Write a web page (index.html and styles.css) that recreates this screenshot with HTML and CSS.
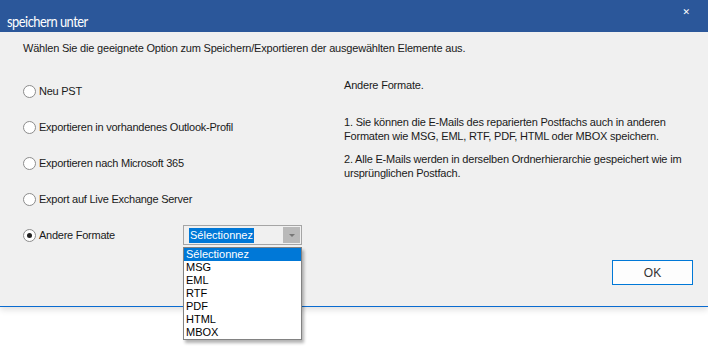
FILE: index.html
```html
<!DOCTYPE html>
<html>
<head>
  <title>speichern unter</title>
  <link rel="stylesheet" href="styles.css">
</head>
<body>
  <div class="dialog">
    <div class="titlebar">
      <span class="title">speichern unter</span>
      <span class="close">&#x2715;</span>
    </div>

    <div class="content">
      <p class="intro">Wählen Sie die geeignete Option zum Speichern/Exportieren der ausgewählten Elemente aus.</p>

      <div class="main">
        <div class="options">
          <div class="option"><span class="radio"></span>Neu PST</div>
          <div class="option"><span class="radio"></span>Exportieren in vorhandenes Outlook-Profil</div>
          <div class="option"><span class="radio"></span>Exportieren nach Microsoft 365</div>
          <div class="option"><span class="radio"></span>Export auf Live Exchange Server</div>
          <div class="option">
            <span class="radio checked"></span><span class="label">Andere Formate</span>
            <div class="combo">
              <div class="combo-box">
                <span class="combo-value">Sélectionnez</span>
                <span class="combo-arrow"></span>
              </div>
              <ul class="combo-list">
                <li class="active">Sélectionnez</li>
                <li>MSG</li>
                <li>EML</li>
                <li>RTF</li>
                <li>PDF</li>
                <li>HTML</li>
                <li>MBOX</li>
              </ul>
            </div>
          </div>
        </div>

        <div class="info">
          <p class="info-head">Andere Formate.</p>
          <p>1. Sie können die E-Mails des reparierten Postfachs auch in anderen Formaten wie MSG, EML, RTF, PDF, HTML oder MBOX speichern.</p>
          <p>2. Alle E-Mails werden in derselben Ordnerhierarchie gespeichert wie im ursprünglichen Postfach.</p>
        </div>
      </div>

      <div class="footer">
        <button class="ok">OK</button>
      </div>
    </div>
  </div>
</body>
</html>
```

FILE: styles.css
```css
html, body {
  height: 100%;
}
body {
  margin: 0;
  background: #fff;
  font-family: "Liberation Sans", Arial, sans-serif;
  font-size: 11px;
  color: #1a1a1a;
}

.dialog {
  width: 708px;
  background: #f0f0f0;
  border-bottom: 1px solid #0a6bd0;
  box-shadow: 0 3px 6px rgba(0, 0, 0, 0.12);
}

.titlebar {
  height: 32px;
  background: #2b579a;
  color: #fff;
  display: flex;
  align-items: center;
  justify-content: space-between;
  padding: 0 18px 0 7px;
}
.title {
  font-family: Lato, sans-serif;
  font-size: 15px;
  letter-spacing: -0.6px;
  margin-top: 10px;
  transform: scaleX(0.86);
  transform-origin: left center;
}
.close {
  font-family: "DejaVu Sans", sans-serif;
  font-size: 9px;
  font-weight: bold;
  margin-top: -8px;
}

.content {
  padding: 9px 15px 21px 23px;
}
.intro {
  margin: 0;
  line-height: 14px;
  letter-spacing: -0.2px;
}

.main {
  display: flex;
  margin-top: 18px;
}
.options {
  width: 321px;
  letter-spacing: -0.25px;
}
.option {
  position: relative;
  display: flex;
  align-items: center;
  height: 36px;
}
.radio {
  width: 11px;
  height: 11px;
  border: 1px solid #8c8c8c;
  border-radius: 50%;
  background: #fff;
  margin-right: 3px;
  box-sizing: content-box;
  display: flex;
  align-items: center;
  justify-content: center;
}
.radio.checked::after {
  content: "";
  width: 5px;
  height: 5px;
  border-radius: 50%;
  background: #222;
}

.combo {
  position: absolute;
  left: 160px;
  top: 8px;
  width: 119px;
  z-index: 5;
  letter-spacing: 0;
}
.combo-box {
  height: 18px;
  border: 1px solid #a5a5a5;
  background: #f0f0f0;
  display: flex;
  align-items: center;
  justify-content: space-between;
  padding: 0 1px 0 5px;
}
.combo-value {
  background: #0078d7;
  color: #fff;
  line-height: 15px;
  padding: 0 1px;
}
.combo-arrow {
  width: 17px;
  height: 16px;
  background: #b9b9b9;
  position: relative;
}
.combo-arrow::after {
  content: "";
  position: absolute;
  left: 6px;
  top: 7px;
  border-left: 3px solid transparent;
  border-right: 3px solid transparent;
  border-top: 3px solid #777;
}
.combo-list {
  list-style: none;
  margin: 2px 0 0;
  padding: 0;
  background: #fff;
  border: 1px solid #828282;
  box-shadow: 2px 3px 3px rgba(0, 0, 0, 0.3);
}
.combo-list li {
  height: 13px;
  line-height: 13px;
  padding-left: 2px;
  color: #000;
}
.combo-list li.active {
  background: #0078d7;
  color: #fff;
}

.info {
  flex: 1;
  padding-top: 5px;
}
.info p {
  margin: 0 0 9px;
  line-height: 14px;
  letter-spacing: -0.2px;
}
.info .info-head {
  margin-bottom: 23px;
}

.footer {
  display: flex;
  justify-content: flex-end;
  margin-top: 7px;
}
.ok {
  width: 81px;
  height: 25px;
  border: 1px solid #0078d7;
  background: #fdfdfd;
  font-family: "Liberation Sans", Arial, sans-serif;
  font-size: 12px;
  color: #333;
}
```
